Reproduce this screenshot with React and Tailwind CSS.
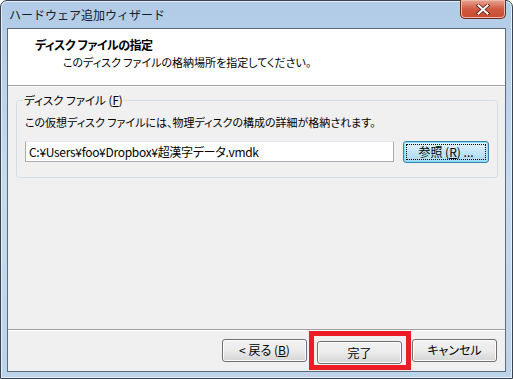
const font = { fontFamily: '"Noto Sans CJK JP", "Noto Sans", sans-serif' };

function WinButton({ children, className = "" }) {
  return (
    <button
      className={
        "h-[23px] w-[85px] rounded-[3px] border border-[#707070] bg-gradient-to-b from-[#f2f2f2] via-[#ebebeb] to-[#d5d5d5] text-[12px] leading-[16px] text-black shadow-[inset_0_0_0_1px_#fcfcfc] " +
        className
      }
    >
      {children}
    </button>
  );
}

function CloseIcon() {
  return (
    <svg width="14" height="11" viewBox="0 0 14 11">
      <path
        d="M2.5 1.5 L11.5 9.5 M11.5 1.5 L2.5 9.5"
        stroke="#5a2016"
        strokeWidth="3.6"
        strokeLinecap="square"
      />
      <path
        d="M2.5 1.5 L11.5 9.5 M11.5 1.5 L2.5 9.5"
        stroke="#ffffff"
        strokeWidth="2"
        strokeLinecap="square"
      />
    </svg>
  );
}

export default function App() {
  return (
    <div className="w-[513px] h-[379px] overflow-hidden bg-white" style={font}>
      <div className="flex h-full w-full flex-col rounded-t-[7px] border border-[#3a4450] bg-gradient-to-b from-[#b2cbe6] via-[#c6dbf0] to-[#bcd3ea] shadow-[inset_0_0_0_1px_#e4eefa]">
        {/* title bar */}
        <div className="flex h-[27px] items-start justify-between pl-[8px] pr-[6px]">
          <span className="mt-[6px] text-[12px] leading-[16px] text-[#10202f]">
            ハードウェア追加ウィザード
          </span>
          <div className="-mt-px flex h-[19px] w-[46px] items-center justify-center rounded-b-[5px] border border-t-0 border-[#6a2a1f] bg-gradient-to-b from-[#e8a595] via-[#cf5a42] to-[#c94a30] shadow-[inset_0_0_0_1px_#f0b8a8]">
            <CloseIcon />
          </div>
        </div>

        {/* client area */}
        <div className="mx-[6px] mb-[6px] flex flex-1 flex-col border border-[#5c6b7c] bg-[#f0f0f0] [font-feature-settings:'palt']">
          <div className="h-[57px] border-b border-[#a0a0a0] bg-white pl-[27px] pt-[8px]">
            <div className="text-[12px] font-bold leading-[16px] tracking-[-0.5px] text-black">
              ディスク ファイルの指定
            </div>
            <div className="mt-px pl-[28px] text-[11px] leading-[16px] text-black">
              このディスク ファイルの格納場所を指定してください。
            </div>
          </div>

          <div className="flex-1 border-t border-white px-[8px] pt-[5px]">
            <fieldset className="rounded-[3px] border border-[#d5dfe5] px-[8px] pb-[14px]">
              <legend className="ml-[-2px] px-[1px] text-[11.5px] leading-[16px] text-black">
                ディスク ファイル (<span className="underline">F</span>)
              </legend>
              <div className="mt-[6px] text-[11px] leading-[16px] text-black">
                この仮想ディスク ファイルには、物理ディスクの構成の詳細が格納されます。
              </div>
              <div className="mt-[11px] flex items-start gap-[9px]">
                <div className="flex h-[21px] w-[369px] items-center border border-[#abadb3] border-t-[#e3e9ef] bg-white px-[3px] text-[12px] leading-[16px] tracking-[-0.3px] text-black">
                  C:¥Users¥foo¥Dropbox¥超漢字データ.vmdk
                </div>
                <button className="h-[22px] w-[86px] rounded-[3px] border border-[#3c7fb1] bg-gradient-to-b from-[#e5f4fc] via-[#c4e5f6] to-[#a9d9f2] p-[2px] shadow-[inset_0_0_0_1px_#7fe1f7]">
                  <div className="flex h-full w-full items-center justify-center border border-dotted border-black text-[12px] leading-[16px] text-black">
                    参照 (<span className="underline">R</span>) ...
                  </div>
                </button>
              </div>
            </fieldset>
          </div>

          <div className="flex justify-end gap-[10px] border-t border-[#a0a0a0] pb-[7px] pl-[8px] pr-[8px] pt-[9px] shadow-[inset_0_1px_0_#ffffff]">
            <WinButton>
              &lt; 戻る (<span className="underline">B</span>)
            </WinButton>
            <div className="relative">
              <WinButton>完了</WinButton>
              <div className="pointer-events-none absolute -bottom-[6px] -left-[8px] -right-[9px] -top-[8px] border-[5px] border-[#ed1c24]" />
            </div>
            <WinButton>キャンセル</WinButton>
          </div>
        </div>
      </div>
    </div>
  );
}
